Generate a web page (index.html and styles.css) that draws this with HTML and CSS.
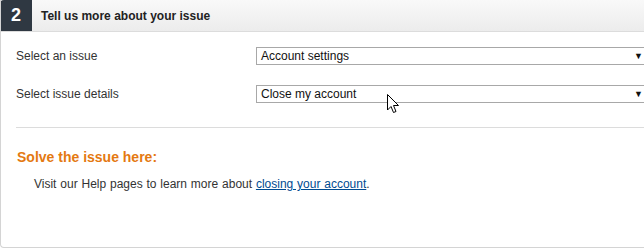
FILE: index.html
```html
<!DOCTYPE html>
<html>
<head>
<meta charset="utf-8">
<link rel="stylesheet" href="styles.css">
</head>
<body>
<div class="panel">
  <div class="head">
    <div class="num">2</div>
    <div class="title">Tell us more about your issue</div>
  </div>
  <div class="body">
    <div class="rows">
      <div class="row">
        <div class="label">Select an issue</div>
        <div class="select"><span>Account settings</span><span class="arrow">▼</span></div>
      </div>
      <div class="row">
        <div class="label">Select issue details</div>
        <div class="select"><span>Close my account</span><span class="arrow">▼</span>
          <svg class="cursor" width="13" height="20" viewBox="0 0 13 20"><path d="M0.5 0.5 L0.5 16 L4 12.5 L6.5 18.5 L9 17.5 L6.5 11.5 L11.5 11.5 Z" fill="#fff" stroke="#000" stroke-width="1"/></svg>
        </div>
      </div>
    </div>
    <div class="divider"></div>
    <div class="solve">Solve the issue here:</div>
    <div class="visit">Visit our Help pages to learn more about <a href="#">closing your account</a>.</div>
  </div>
</div>
</body>
</html>
```
FILE: styles.css
```css
html, body { margin: 0; padding: 0; background: #fff; }
body { font-family: "Liberation Sans", Arial, sans-serif; color: #333; font-size: 12px; }
.panel {
  width: 660px;
  height: 248px;
  border-left: 1px solid #d4d4d4;
  border-bottom: 1px solid #d4d4d4;
  border-radius: 0 0 0 4px;
  box-sizing: border-box;
  overflow: hidden;
}
.head {
  display: flex;
  height: 32px;
  background: linear-gradient(#f9f9f9, #ececec);
  border-bottom: 1px solid #dcdcdc;
  box-sizing: border-box;
  margin-left: -1px;
}
.num {
  width: 32px;
  background: #2f3842;
  color: #fff;
  font-weight: bold;
  font-size: 18px;
  display: flex;
  align-items: center;
  justify-content: center;
  border-radius: 4px 0 0 0;
}
.title {
  font-weight: bold;
  font-size: 12px;
  color: #222;
  padding-left: 9px;
  display: flex;
  align-items: center;
}
.body { padding: 15px 0 0 15px; }
.rows { display: flex; flex-direction: column; gap: 20px; }
.row { display: flex; align-items: center; height: 18px; }
.label { width: 240px; font-size: 12px; color: #333; }
.select {
  position: relative;
  flex: 1;
  height: 18px;
  border: 1px solid #a8a8a8;
  border-right: none;
  box-sizing: border-box;
  display: flex;
  align-items: center;
  padding-left: 4px;
  font-size: 12px;
  color: #111;
}
.arrow { position: absolute; left: 377px; font-size: 9px; color: #111; }
.cursor { position: absolute; left: 130px; top: 8px; }
.divider { border-top: 1px solid #dcdcdc; margin-top: 24px; }
.solve { color: #e47911; font-weight: bold; font-size: 14px; margin-top: 21px; margin-left: 1px; }
.visit { margin: 12px 0 0 18px; font-size: 12px; color: #333; word-spacing: 0.5px; }
.visit a { color: #004b91; text-decoration: underline; }
```
